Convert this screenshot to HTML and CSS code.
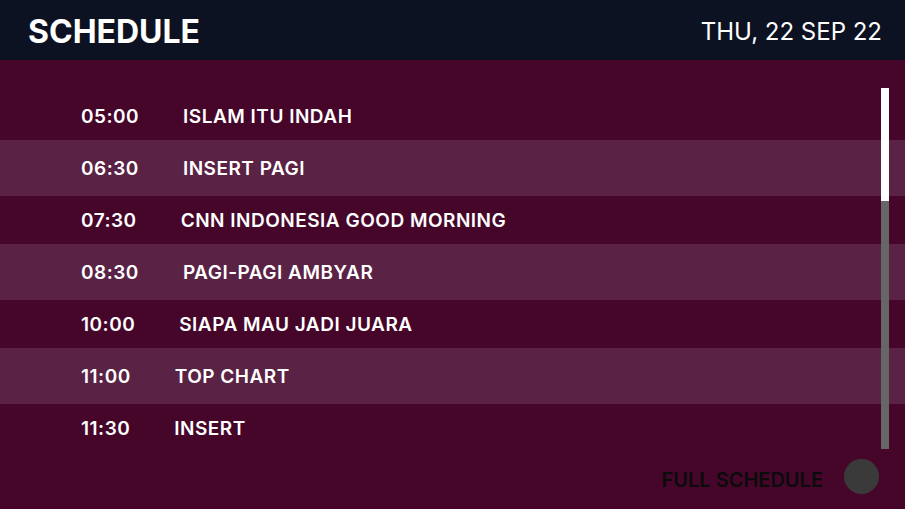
FILE: index.html
```html
<!DOCTYPE html>
<html lang="en">
<head>
<meta charset="utf-8">
<title>Schedule</title>
<link rel="stylesheet" href="styles.css">
</head>
<body>
<header class="topbar">
  <h1 class="title">SCHEDULE</h1>
  <div class="date">THU, 22 SEP 22</div>
</header>
<main class="panel">
  <ul class="list">
    <li class="row"><span class="time">05:00</span><span class="show">ISLAM ITU INDAH</span></li>
    <li class="row alt"><span class="time">06:30</span><span class="show">INSERT PAGI</span></li>
    <li class="row"><span class="time">07:30</span><span class="show">CNN INDONESIA GOOD MORNING</span></li>
    <li class="row alt"><span class="time">08:30</span><span class="show">PAGI-PAGI AMBYAR</span></li>
    <li class="row"><span class="time">10:00</span><span class="show">SIAPA MAU JADI JUARA</span></li>
    <li class="row alt"><span class="time">11:00</span><span class="show">TOP CHART</span></li>
    <li class="row"><span class="time">11:30</span><span class="show">INSERT</span></li>
  </ul>
  <div class="scrollbar"><div class="thumb"></div></div>
  <div class="footer">
    <span class="full">FULL SCHEDULE</span>
    <span class="dot"></span>
  </div>
</main>
</body>
</html>
```
FILE: styles.css
```css
* { box-sizing: border-box; }
html, body { margin: 0; padding: 0; }
body {
  width: 905px;
  height: 509px;
  overflow: hidden;
  background: #45062a;
  font-family: Inter, "Noto Sans", sans-serif;
  color: #fff;
}
.topbar {
  height: 60px;
  background: #0c1221;
  display: flex;
  align-items: center;
  justify-content: space-between;
  padding: 2px 23px 0 28px;
}
.title {
  margin: 0;
  font-size: 32px;
  font-weight: 700;
  letter-spacing: 0;
}
.date {
  font-size: 24px;
  font-weight: 400;
}
.panel {
  position: relative;
  height: 449px;
  padding-top: 30px;
}
.list {
  list-style: none;
  margin: 0;
  padding: 0;
}
.row {
  height: 52px;
  display: flex;
  align-items: center;
  gap: 44px;
  padding-left: 81px;
  font-size: 19px;
  font-weight: 600;
  letter-spacing: 0.5px;
}
.row.alt {
  background: #5a2244;
  height: 56px;
  margin: -2px 0;
}
.scrollbar {
  position: absolute;
  left: 881px;
  top: 28px;
  width: 8px;
  height: 361px;
  background: #666666;
}
.thumb {
  height: 113px;
  background: #ffffff;
}
.footer {
  display: flex;
  align-items: center;
  justify-content: flex-end;
  gap: 21px;
  padding: 5px 26px 0 0;
}
.full {
  color: #0b0b0b;
  font-size: 20px;
  font-weight: 600;
  padding-top: 6px;
}
.dot {
  width: 35px;
  height: 35px;
  border-radius: 50%;
  background: #3a3a3a;
}
```
